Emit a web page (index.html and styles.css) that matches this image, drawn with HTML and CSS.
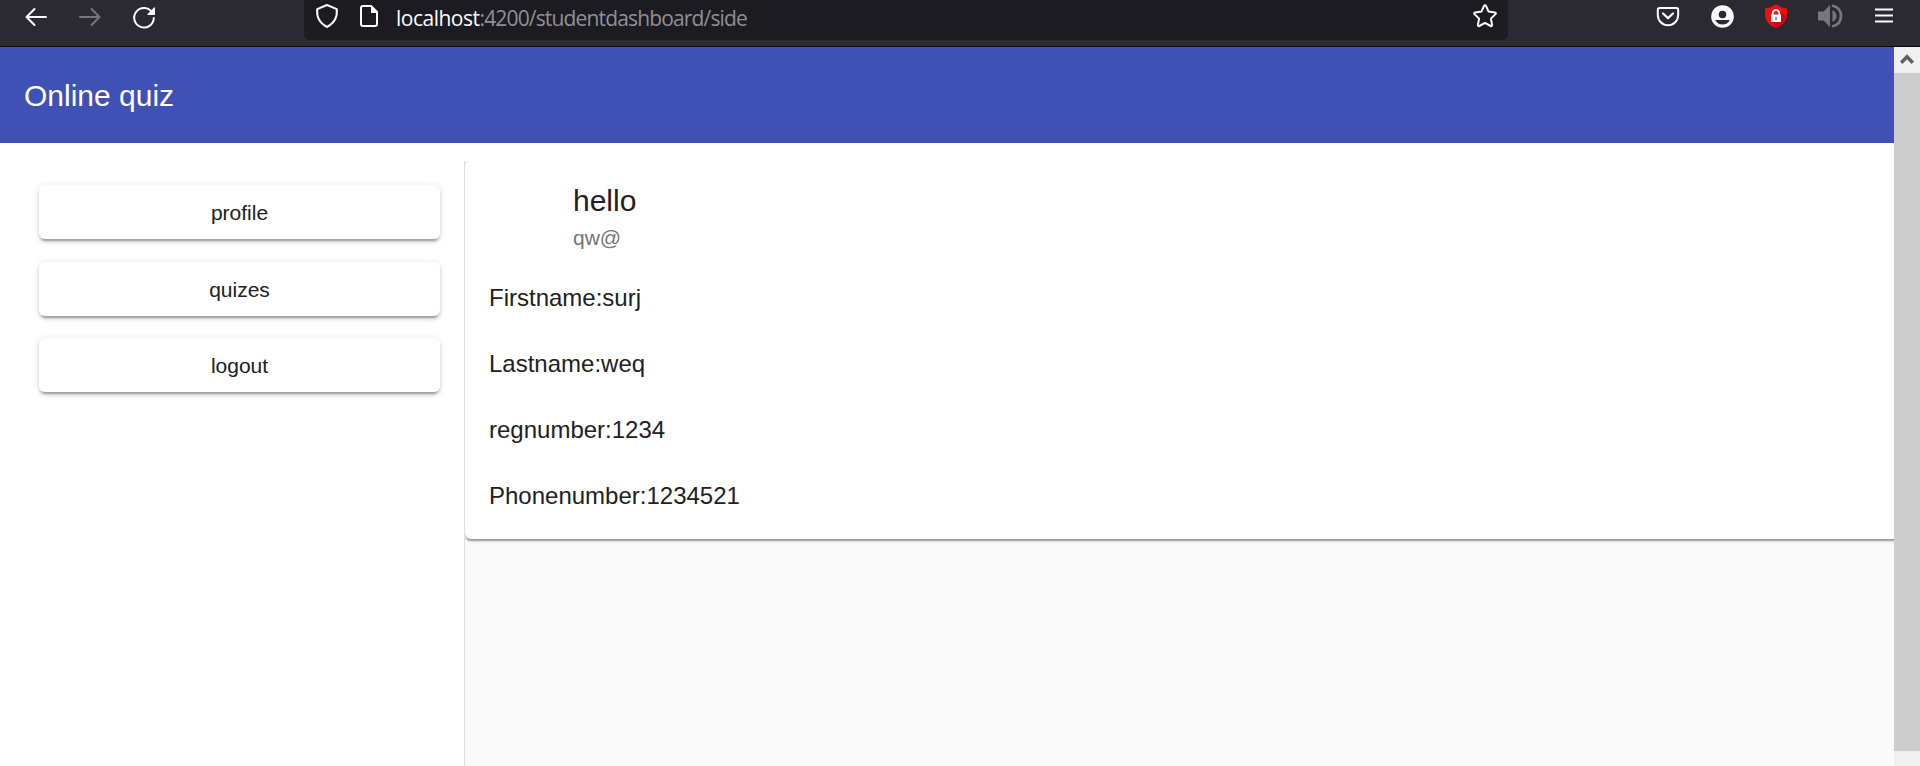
FILE: index.html
```html
<!DOCTYPE html>
<html lang="en">
<head>
<meta charset="utf-8">
<title>Online quiz</title>
<link rel="stylesheet" href="styles.css">
</head>
<body>
<div class="browser">
  <nav class="chrome">
    <svg class="nav-icons" width="304" height="46" fill="none" stroke="#fbfbfe" stroke-width="2" stroke-linecap="round" stroke-linejoin="round">
      <path d="M46 17H26.500M34.500 9l-8 8 8 8"/>
      <path stroke="#77767b" d="M80 17h19.500M91.500 9l8 8-8 8"/>
      <path d="M152.300 12.500A9.800 9.800 0 1 0 153.800 18"/>
      <path fill="#fbfbfe" stroke="none" d="M155 8v6.300q0 .7-.7.7H148q-1.200 0-.4-.9l6.400-6.500q1-.8 1 .4z"/>
    </svg>
    <div class="urlbar">
      <svg class="url-icons" width="92" height="40" fill="none" stroke="#fbfbfe" stroke-width="2" stroke-linejoin="round">
        <path d="M23 5L32.800 9.200C33.500 17 30 23.500 23 27C16 23.500 12.500 17 13.200 9.200Z"/>
        <path d="M67 6H59q-2 0-2 2v16q0 2 2 2h12q2 0 2-2V12z"/>
        <path fill="#fbfbfe" stroke="none" d="M67 5l7 7v1h-7z"/>
      </svg>
      <div class="url"><span class="host">localhost</span>:4200/studentdashboard/side</div>
      <svg class="star" width="26" height="28" fill="none" stroke="#fbfbfe" stroke-width="2" stroke-linejoin="round">
        <path d="M13 4.200q.7 0 1 .7l2.600 5.700 6.200.8q1.800.4.700 1.700l-4.600 4.500 1.200 6.300q.1 1.700-1.400 1.100L13 21.900 7.300 25q-1.500.6-1.400-1.100l1.200-6.300-4.600-4.500q-1.100-1.300.700-1.700l6.200-.8L12 4.900q.3-.7 1-.7z"/>
      </svg>
    </div>
    <svg class="tools" width="260" height="46" fill="none" stroke="#fbfbfe" stroke-width="2" stroke-linecap="round" stroke-linejoin="round">
      <path d="M9.500 8h17q1.700 0 1.700 1.700V15a10.200 10.200 0 0 1-20.400 0V9.700Q7.800 8 9.500 8z"/>
      <path stroke-width="2.200" d="M13 13.500l5 4.600 5-4.600"/>
      <circle cx="72.500" cy="16.500" r="11.300" fill="#fbfbfe" stroke="none"/>
      <circle cx="72.500" cy="14.500" r="3.800" fill="#2b2a33" stroke="none"/>
      <path fill="#2b2a33" stroke="none" d="M65.200 20h14.600c-1.500 3-4 4.500-7.300 4.500s-5.800-1.500-7.300-4.500z"/>
      <path fill="#f00e0e" stroke="none" d="M126 4q5 4 11 4.300v7q-.5 9-11 12.700-10.500-3.700-11-12.700v-7q6-.3 11-4.300z"/>
      <path fill="#c90a10" stroke="none" d="M131.500 12l5.400 5q-1.500 7.300-10.400 10.800l-5-6z"/>
      <path fill="#fff" stroke="none" d="M121 14.500h10V22h-10z"/>
      <path stroke="#fff" d="M122.800 15v-1.800a3.200 3.200 0 0 1 6.400 0V15"/>
      <path stroke="#a44" stroke-width="1.300" d="M126 17.500v2"/>
      <path fill="#77767b" stroke="none" d="M168 11.500h5.500L180 5v22l-6.500-6.500H168zM182.500 10q4 2 4 6t-4 6z"/>
      <path stroke="#77767b" stroke-width="2.800" stroke-linecap="butt" d="M182 5.500q9 2 9 10.500t-9 10.500"/>
      <path stroke-linecap="butt" d="M225 9.500h18M225 15.500h18M225 21.500h18"/>
    </svg>
  </nav>
  <div class="viewport">
    <div class="page">
      <header class="toolbar">Online quiz</header>
      <div class="content">
        <aside class="sidebar">
          <button class="menu-button">profile</button>
          <button class="menu-button">quizes</button>
          <button class="menu-button">logout</button>
        </aside>
        <main class="main">
          <section class="card">
            <div class="card-head">
              <h1 class="card-title">hello</h1>
              <p class="card-subtitle">qw@</p>
            </div>
            <div class="details">
              <p>Firstname:surj</p>
              <p>Lastname:weq</p>
              <p>regnumber:1234</p>
              <p>Phonenumber:1234521</p>
            </div>
          </section>
        </main>
      </div>
    </div>
    <div class="scrollbar">
      <svg class="scroll-up" width="26" height="26" fill="none" stroke="#606060" stroke-width="3.500"><path d="M7.200 15.800L13 9.800l5.800 6"/></svg>
      <div class="thumb"></div>
    </div>
  </div>
</div>
</body>
</html>
```
FILE: styles.css
```css
* { box-sizing: border-box; }
body { margin: 0; font-family: "Liberation Sans", Arial, sans-serif; color: #212121; }
h1, p { margin: 0; font-weight: 400; }
.browser { width: 1920px; height: 766px; display: flex; flex-direction: column; overflow: hidden; }
.chrome { height: 47px; flex: none; display: flex; background: #2b2a33; border-bottom: 1px solid #0c0c0d; }
.nav-icons { flex: none; }
.urlbar { width: 1204px; height: 40px; flex: none; display: flex; background: #1c1b22; border-radius: 0 0 6px 6px; }
.url-icons { flex: none; }
.url { flex: 1; font: 21px/36px "Open Sans", "Noto Sans", sans-serif; letter-spacing: -0.84px; color: #8f8f96; white-space: nowrap; }
.host { color: #fbfbfe; letter-spacing: -0.5px; }
.star { flex: none; margin: 1px 10px 0 0; }
.tools { flex: none; margin-left: 142px; }
.viewport { flex: 1; min-height: 0; display: flex; }
.page { flex: 1; min-width: 0; display: flex; flex-direction: column; background: #fff; }
.toolbar { height: 96px; flex: none; padding-left: 24px; background: #3f51b5; color: #fff; font-size: 30px; line-height: 98px; }
.content { flex: 1; min-height: 0; margin-top: 18px; display: flex; }
.sidebar { width: 465px; flex: none; padding: 24px 24px 0 39px; display: flex; flex-direction: column; gap: 22.5px; border-right: 1px solid #dedede; }
.menu-button { height: 54px; flex: none; padding: 2px 0 0; border: 0; border-radius: 6px; background: #fff; color: #212121; font: 21px/52px "Liberation Sans", Arial, sans-serif; box-shadow: 0 4.5px 1.5px -3px rgba(0,0,0,.2), 0 3px 3px rgba(0,0,0,.14), 0 1.5px 7.5px rgba(0,0,0,.12); }
.main { flex: 1; min-width: 0; background: #fafafa; overflow: hidden; }
.card { height: 378px; padding: 24px; margin-right: -20px; background: #fff; border-radius: 6px; box-shadow: 0 3px 1.5px -1.5px rgba(0,0,0,.2), 0 1.5px 1.5px rgba(0,0,0,.14), 0 1.5px 4.5px rgba(0,0,0,.12); }
.card-head { padding-left: 84px; }
.card-title { font-size: 30px; line-height: 32px; }
.card-subtitle { margin-top: 6px; font-size: 21px; line-height: 30px; color: #757575; }
.details { margin-top: 30px; display: flex; flex-direction: column; gap: 36px; font-size: 24px; line-height: 30px; }
.scrollbar { width: 26px; flex: none; background: #f0f0f0; display: flex; flex-direction: column; }
.scroll-up { flex: none; display: block; }
.thumb { height: 678px; background: #cdcdcd; }
```
